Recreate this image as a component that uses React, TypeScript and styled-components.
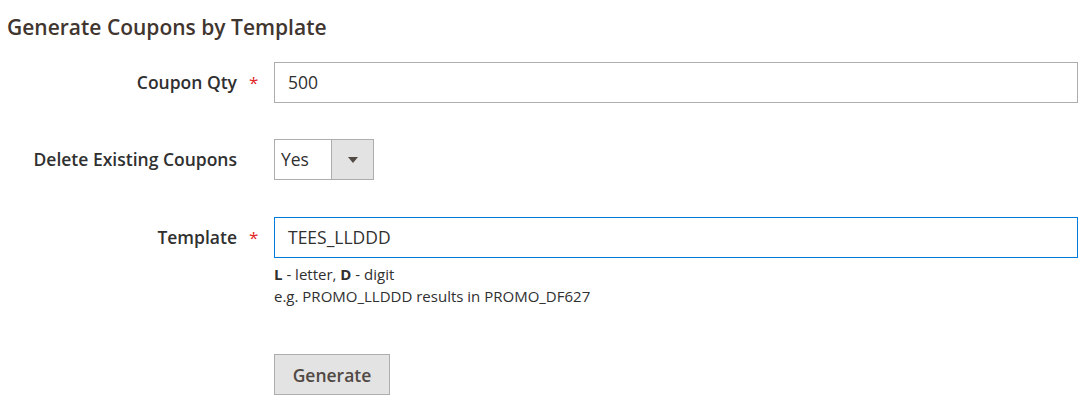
import React from "react";
import styled, { createGlobalStyle } from "styled-components";

const GlobalStyle = createGlobalStyle`
  body {
    margin: 0;
    background: #ffffff;
    font-family: "Open Sans", "Liberation Sans", sans-serif;
    color: #303030;
  }
`;

const Page = styled.div`
  padding: 12px 0 0 7px;
`;

const Title = styled.h2`
  margin: 0 0 20px;
  font-size: 21px;
  font-weight: 600;
  line-height: 30px;
  color: #41362f;
`;

const Field = styled.div<{ $gap?: number }>`
  display: grid;
  grid-template-columns: 230px 37px 804px;
  margin-bottom: ${(p) => p.$gap ?? 36}px;
`;

const Label = styled.label`
  text-align: right;
  font-size: 17.5px;
  font-weight: 600;
  line-height: 41px;
  color: #303030;
`;

const Required = styled.span`
  color: #e22626;
  font-size: 17px;
  line-height: 41px;
  padding-left: 12px;
`;

const Control = styled.div`
  display: flex;
  flex-direction: column;
  align-items: flex-start;
`;

const Input = styled.div<{ $focused?: boolean }>`
  box-sizing: border-box;
  align-self: stretch;
  height: 41px;
  border: 1px solid ${(p) => (p.$focused ? "#007bdb" : "#adadad")};
  padding: 0 13px;
  font-size: 17.5px;
  line-height: 39px;
  color: #303030;
`;

const Select = styled.div`
  box-sizing: border-box;
  display: flex;
  width: 100px;
  height: 41px;
  border: 1px solid #adadad;
`;

const SelectValue = styled.div`
  flex: 1;
  padding-left: 6px;
  font-size: 17.5px;
  line-height: 39px;
  color: #303030;
`;

const SelectArrow = styled.div`
  width: 41px;
  border-left: 1px solid #adadad;
  background: #e3e3e3;
  display: flex;
  align-items: center;
  justify-content: center;
  &::after {
    content: "";
    border-left: 5px solid transparent;
    border-right: 5px solid transparent;
    border-top: 6px solid #514943;
  }
`;

const Note = styled.div`
  margin-top: 5px;
  font-size: 15px;
  line-height: 22px;
  color: #303030;
  b {
    font-weight: 700;
  }
`;

const Button = styled.button`
  box-sizing: border-box;
  width: 116px;
  height: 41px;
  border: 1px solid #adadad;
  background: #e3e3e3;
  color: #514943;
  font-family: "Open Sans", "Liberation Sans", sans-serif;
  font-size: 17.5px;
  font-weight: 600;
  padding: 0;
`;

export default function App() {
  return (
    <Page>
      <GlobalStyle />
      <Title>Generate Coupons by Template</Title>
      <Field>
        <Label>Coupon Qty</Label>
        <Required>*</Required>
        <Control>
          <Input>500</Input>
        </Control>
      </Field>
      <Field $gap={37}>
        <Label>Delete Existing Coupons</Label>
        <span />
        <Control>
          <Select>
            <SelectValue>Yes</SelectValue>
            <SelectArrow />
          </Select>
        </Control>
      </Field>
      <Field $gap={47}>
        <Label>Template</Label>
        <Required>*</Required>
        <Control>
          <Input $focused>TEES_LLDDD</Input>
          <Note>
            <b>L</b> - letter, <b>D</b> - digit
            <br />
            e.g. PROMO_LLDDD results in PROMO_DF627
          </Note>
        </Control>
      </Field>
      <Field $gap={0}>
        <span />
        <span />
        <Control>
          <Button>Generate</Button>
        </Control>
      </Field>
    </Page>
  );
}
